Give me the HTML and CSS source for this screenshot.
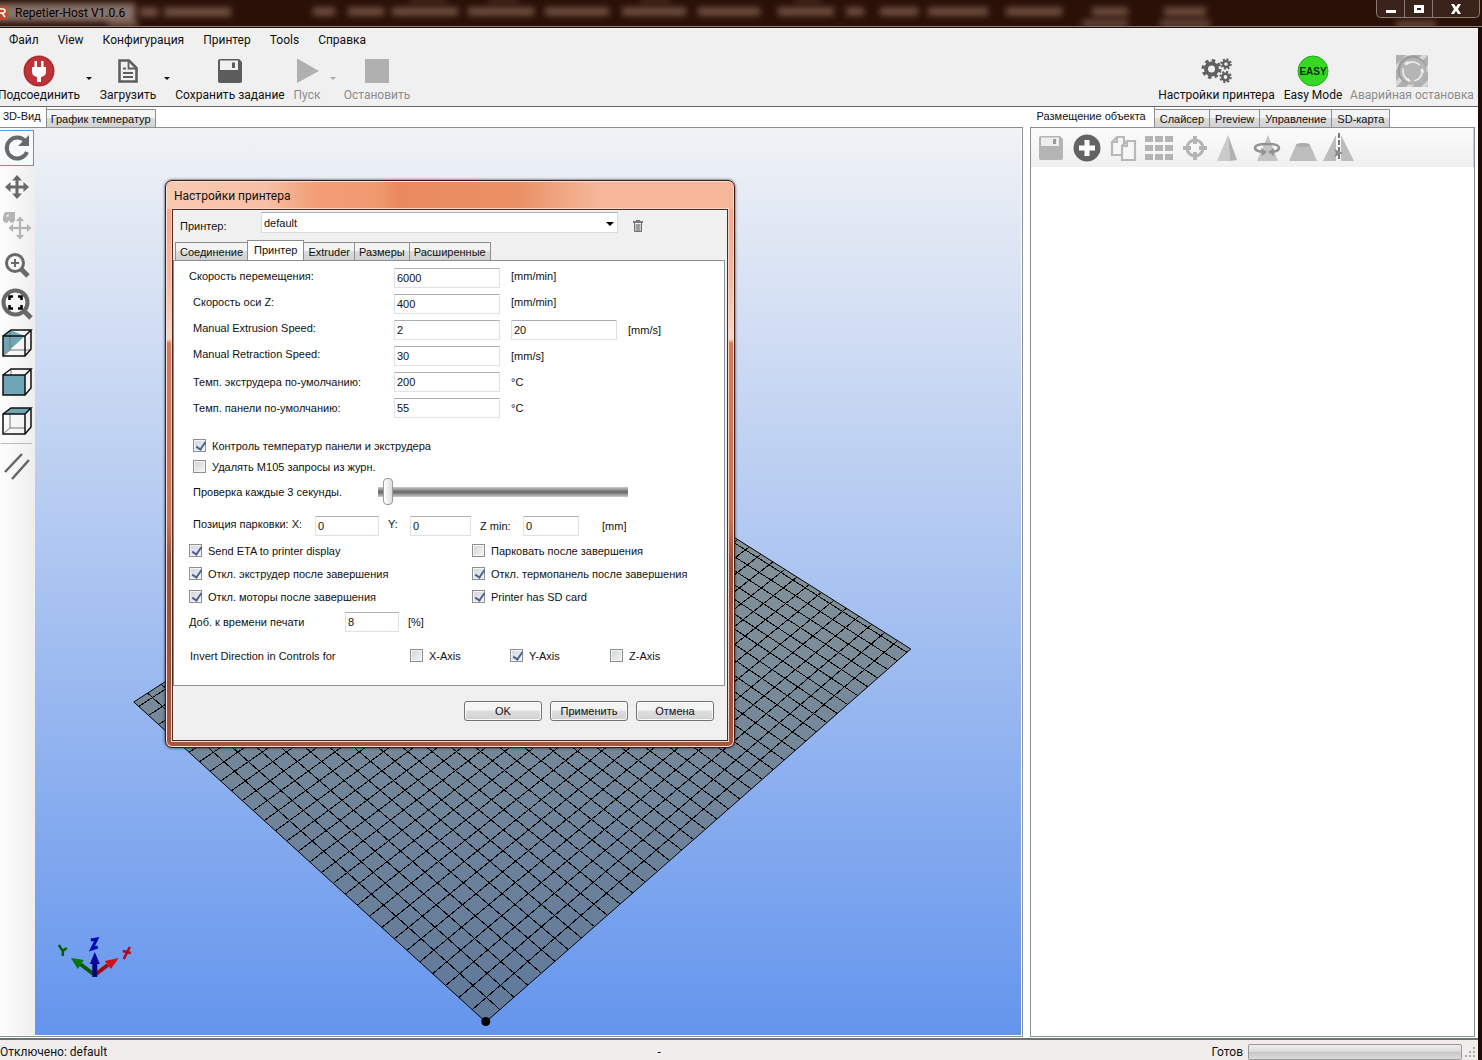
FILE: index.html
```html
<!DOCTYPE html>
<html lang="ru">
<head>
<meta charset="utf-8">
<title>Repetier-Host V1.0.6</title>
<link rel="stylesheet" href="styles.css">
</head>
<body>
<div class="app">
  <header class="titlebar">
    <svg class="glass" viewBox="0 0 1482 27" preserveAspectRatio="xMidYMid slice" aria-hidden="true">
      <defs><filter id="soft" x="-20%" y="-60%" width="140%" height="220%"><feGaussianBlur stdDeviation="3"/></filter></defs>
      <g filter="url(#soft)" fill="#8a6656" opacity=".75">
        <rect x="-10" y="4" width="145" height="18" fill="#a8938a"/>
        <rect x="140" y="8" width="18" height="9"/><rect x="164" y="8" width="67" height="9"/><rect x="108" y="22" width="30" height="6"/>
        <rect x="313" y="8" width="22" height="8"/><rect x="348" y="8" width="36" height="8"/><rect x="392" y="8" width="66" height="8"/><rect x="468" y="8" width="66" height="8"/>
        <rect x="545" y="8" width="64" height="8"/><rect x="622" y="8" width="64" height="8"/><rect x="698" y="8" width="62" height="8"/><rect x="778" y="8" width="56" height="8"/>
        <rect x="846" y="8" width="18" height="8"/><rect x="880" y="8" width="38" height="8"/><rect x="928" y="8" width="60" height="8"/><rect x="1006" y="8" width="56" height="8"/>
        <rect x="1092" y="8" width="36" height="8"/><rect x="1164" y="8" width="42" height="8"/><rect x="1082" y="21" width="46" height="6"/><rect x="1160" y="21" width="50" height="6"/>
        <rect x="410" y="0" width="36" height="2"/><rect x="488" y="0" width="30" height="2"/><rect x="640" y="0" width="30" height="2"/><rect x="796" y="0" width="24" height="2"/>
        <rect x="1396" y="22" width="40" height="6"/>
      </g>
    </svg>
    <svg class="app-icon" viewBox="0 0 9 16" aria-hidden="true"><path d="M0 1h7v14H0z" fill="#c8432b"/><path d="M7 1l2 1v11l-2 2z" fill="#6d7a4a"/><path d="M0 4h3q2 0 2 2t-2 2H0M2 8l3 4" stroke="#fff" stroke-width="1.6" fill="none"/></svg>
    <h1 class="app-title">Repetier-Host V1.0.6</h1>
    <div class="win-buttons">
      <button type="button" aria-label="Свернуть"><svg viewBox="0 0 12 10"><path d="M1 6h10v3H1z"/></svg></button>
      <button type="button" aria-label="Развернуть"><svg viewBox="0 0 12 10"><path d="M1 1h10v8H1zM4 4v2h4V4z" fill-rule="evenodd"/></svg></button>
      <button type="button" class="wide" aria-label="Закрыть"><svg viewBox="0 0 12 10"><path d="M1 0h3l2 3 2-3h3L8 5l3 5H8L6 7l-2 3H1l3-5z"/></svg></button>
    </div>
  </header>
  <div class="frame">
    <nav class="menu">
      <button type="button">Файл</button><button type="button">View</button><button type="button">Конфигурация</button><button type="button">Принтер</button><button type="button">Tools</button><button type="button">Справка</button>
    </nav>
    <div class="toolbar">
      <button type="button" class="tool w-connect"><svg viewBox="0 0 32 32"><circle cx="16" cy="16" r="15.500" fill="#be3337"/><circle cx="16" cy="16" r="14.500" fill="none" stroke="#a3282c"/><path d="M11.500 6h2.500v6h4V6h2.500v6H23v5q0 4-5 5v5h-4v-5q-5-1-5-5v-5h2.500z" fill="#fff"/></svg><span>Подсоединить</span></button>
      <button type="button" class="drop" aria-label="Выбор соединения"></button>
      <button type="button" class="tool w-load"><svg viewBox="0 0 32 32"><path d="M7.500 5.500h9.500L24.500 13v13.500h-17z" fill="none" stroke="#5f5f5f" stroke-width="2.600"/><path d="M16.500 5v8.500H25M11 13.500h3M11 18h10M11 22h10" fill="none" stroke="#5f5f5f" stroke-width="1.800"/></svg><span>Загрузить</span></button>
      <button type="button" class="drop" aria-label="Последние файлы"></button>
      <button type="button" class="tool w-save"><svg viewBox="0 0 32 32"><path d="M4 6q0-2 2-2h19l3 3v19q0 2-2 2H6q-2 0-2-2z" fill="#5c5c5c"/><path d="M6 5.500h18v9.500H6z" fill="#f0f0f0"/><path d="M18 7.500h3V13h-3z" fill="#5c5c5c"/></svg><span>Сохранить задание</span></button>
      <button type="button" class="tool w-run" disabled><svg viewBox="0 0 32 32"><path d="M6 3.500L28 16 6 28z" fill="#b0b0b0"/></svg><span>Пуск</span></button>
      <button type="button" class="drop" disabled aria-label="Параметры пуска"></button>
      <button type="button" class="tool w-stop" disabled><svg viewBox="0 0 32 32"><path d="M4 4h24v24H4z" fill="#b0b0b0"/></svg><span>Остановить</span></button>
      <span class="spacer"></span>
      <button type="button" class="tool w-settings"><svg viewBox="0 0 32 32" fill="none" stroke="#606060"><circle cx="10.500" cy="14" r="5.500" stroke-width="4"/><circle cx="10.500" cy="14" r="8.500" stroke-width="3" stroke-dasharray="3.400 3.280"/><circle cx="25" cy="9" r="3" stroke-width="2.400"/><circle cx="25" cy="9" r="4.800" stroke-width="2" stroke-dasharray="1.900 1.870"/><circle cx="24.500" cy="22" r="3.200" stroke-width="2.600"/><circle cx="24.500" cy="22" r="5.200" stroke-width="2" stroke-dasharray="2.100 1.980"/></svg><span>Настройки принтера</span></button>
      <button type="button" class="tool w-easy"><svg viewBox="0 0 32 32"><circle cx="16" cy="16" r="15" fill="#35d923" stroke="#23a81b"/><text x="16" y="20" class="easy-text" text-anchor="middle">EASY</text></svg><span>Easy Mode</span></button>
      <button type="button" class="tool w-stopall" disabled><svg viewBox="0 0 32 32"><path d="M0 0h32v32H0z" fill="#b0b0b0"/><path d="M0 10L10 0h5L0 15zM0 26l26-26h6L0 32zM10 32L32 10v6L16 32zM25 32l7-7v5l-2 2z" fill="#d8d8d8"/><circle cx="16" cy="15" r="14.500" fill="#9c9c9c"/><circle cx="17" cy="16" r="13" fill="#b5b5b5"/><circle cx="16.500" cy="16.500" r="9.500" fill="none" stroke="#efefef" stroke-width="1.500" stroke-dasharray="15.900 4" stroke-dashoffset="3"/><path d="M8 8l5-2-2 4zM27 13l1 5-4-2zM13 27l-4-3 4-1z" fill="#efefef"/></svg><span>Аварийная остановка</span></button>
    </div>
    <main class="work">
      <section class="left">
        <div class="tabs" role="tablist"><button type="button" role="tab" class="tab on" aria-selected="true">3D-Вид</button><button type="button" role="tab" class="tab">График температур</button></div>
        <div class="view">
          <div class="side">
            <button type="button" class="on" aria-label="Вращать"><svg viewBox="0 0 32 32"><path d="M24.500 9.500A10.500 10.500 0 1 0 26 20" fill="none" stroke="#696969" stroke-width="4"/><path d="M28 3v11H17z" fill="#696969"/></svg></button>
            <button type="button" aria-label="Переместить"><svg viewBox="0 0 32 32" fill="#696969"><path d="M16 4l5 5.500h-3.500v5h5V11L28 16l-5.500 5v-3.500h-5v5H21L16 28l-5-5.500h3.500v-5h-5V21L4 16l5.500-5v3.500h5v-5H11z"/></svg></button>
            <button type="button" aria-label="Переместить объект"><svg viewBox="0 0 32 32" fill="#b4b4b4"><path d="M4 2h10v9H2V6.500zM4.500 6.500h3V4z" fill-rule="evenodd"/><circle cx="5" cy="11" r="2"/><circle cx="11" cy="11" r="2"/><path d="M19 6l5 5.500h-3.500v5h5V13L31 18l-5.500 5v-3.500h-5v5H24L19 30l-5-5.500h3.500v-5h-5V23L7 18l5.500-5v3.500h5v-5H14z" stroke="#f6f6f6" stroke-width=".8"/></svg></button>
            <button type="button" aria-label="Увеличить"><svg viewBox="0 0 32 32" fill="none" stroke="#696969"><circle cx="14" cy="14" r="8.500" stroke-width="3"/><path d="M20 20l7 7" stroke-width="5"/><path d="M14 10v8M10 14h8" stroke-width="2"/></svg></button>
            <button type="button" aria-label="Показать всё"><svg viewBox="0 0 32 32" fill="none" stroke="#696969"><circle cx="14.500" cy="14.500" r="12" stroke-width="4"/><path d="M23 23l7 7" stroke-width="5"/><path d="M8.500 12V8.500H12M17 8.500h3.500V12M20.500 17v3.500H17M12 20.500H8.500V17" stroke="#000" stroke-width="2.500"/></svg></button>
            <button type="button" aria-label="Изометрия"><svg viewBox="0 0 32 32" class="cube"><path d="M2 9l7-6 15 6L2 29z" class="face"/><path d="M9 3v20l-7 6M9 23h21" class="thin"/><path d="M2 9h22v20H2zM2 9l8-6h20l-6 6M30 3v19l-6 7"/></svg></button>
            <button type="button" aria-label="Спереди"><svg viewBox="0 0 32 32" class="cube"><path d="M2 9h22v20H2z" class="face"/><path d="M10 3v6" class="thin"/><path d="M2 9h22v20H2zM2 9l8-6h20l-6 6M30 3v19l-6 7"/></svg></button>
            <button type="button" aria-label="Сверху"><svg viewBox="0 0 32 32" class="cube"><path d="M2 9l8-6h20l-6 6z" class="face"/><path d="M9 9v14l-7 6M9 23h15" class="thin"/><path d="M2 9h22v20H2zM2 9l8-6h20l-6 6M30 3v19l-6 7"/></svg></button>
            <hr>
            <button type="button" aria-label="Параллельная проекция"><svg viewBox="0 0 32 32"><path d="M4 22L21 4M11 29L28 10" stroke="#666" stroke-width="2.500"/></svg></button>
          </div>
          <svg class="scene" viewBox="35 128 986 907" preserveAspectRatio="xMidYMid slice" role="img" aria-label="Рабочий стол принтера">
            <defs><linearGradient id="bed" x1="0" y1="0" x2="0" y2="1"><stop offset="0" stop-color="#8c9898"/><stop offset="1" stop-color="#60799b"/></linearGradient></defs>
            <polygon points="486,1022 911,649 560,427 134,702" fill="url(#bed)" stroke="#000"/>
            <path id="grid" fill="none" stroke="#000" shape-rendering="crispEdges"/>
            <circle cx="486" cy="1021.500" r="4.500"/>
            <g stroke-width="4">
              <path d="M95 975L79 963" stroke="#0a5a0d"/><path d="M71 958l13 2-6 9z" fill="#08760c"/>
              <path d="M95 975l13-10" stroke="#a00a10"/><path d="M119 958l-8 11-6-8z" fill="#d01018"/>
              <path d="M95 977v-15" stroke="#06067c" stroke-width="5"/><path d="M95 952l5 12H90z" fill="#0808a0"/>
            </g>
            <g fill="none" stroke-width="2.500"><path d="M59 945l4 6 4-3M63 951v5" stroke="#06600a"/><path d="M91 940l6-1-5 10 6-2" stroke="#0808b8" stroke-width="3"/><path d="M130 947l-6 12M123 951l8 2" stroke="#b00818"/></g>
          </svg>
        </div>
      </section>
      <section class="right">
        <div class="tabs" role="tablist"><button type="button" role="tab" class="tab on" aria-selected="true">Размещение объекта</button><button type="button" role="tab" class="tab">Слайсер</button><button type="button" role="tab" class="tab">Preview</button><button type="button" role="tab" class="tab">Управление</button><button type="button" role="tab" class="tab">SD-карта</button></div>
        <div class="panel">
          <div class="obj-tools">
            <button type="button" aria-label="Сохранить"><svg viewBox="0 0 32 32"><path d="M4 6q0-2 2-2h19l3 3v19q0 2-2 2H6q-2 0-2-2z" fill="#b4b4b4"/><path d="M6 5.500h18v8.500H6z" fill="#eee"/><path d="M18 7h3v5h-3z" fill="#999"/></svg></button>
            <button type="button" aria-label="Добавить"><svg viewBox="0 0 32 32"><circle cx="16" cy="16" r="13.500" fill="#636363"/><path d="M16 8v16M8 16h16" stroke="#fff" stroke-width="5"/></svg></button>
            <button type="button" aria-label="Копировать"><svg viewBox="0 0 32 32" fill="#f6f6f6" stroke="#b8b8b8" stroke-width="2.200"><path d="M10 5h7v18H5V10zM10 5v5H5"/><path d="M20 9h8v19H15V14zM20 9v5h-5"/></svg></button>
            <button type="button" aria-label="Расставить"><svg viewBox="0 0 32 32" fill="#b4b4b4"><path d="M2 4h8v6H2zM12 4h8v6h-8zM22 4h8v6h-8zM2 13h8v6H2zM12 13h8v6h-8zM22 13h8v6h-8zM2 22h8v6H2zM12 22h8v6h-8zM22 22h8v6h-8z"/></svg></button>
            <button type="button" aria-label="Центрировать"><svg viewBox="0 0 32 32" fill="none" stroke="#b4b4b4"><circle cx="16" cy="16" r="8" stroke-width="3"/><path d="M16 4v8M16 20v8M4 16h8M20 16h8" stroke-width="4"/></svg></button>
            <button type="button" aria-label="Масштаб"><svg viewBox="0 0 32 32"><path d="M13 3L2 29h13z" fill="#cacaca"/><path d="M13 3l2 26 7-1z" fill="#b2b2b2"/></svg></button>
            <button type="button" aria-label="Вращение"><svg viewBox="0 0 32 32"><path d="M17 3L6 29h21z" fill="#c4c4c4"/><path d="M12 20Q4 19 4 16q0-4 12-4t12 4q0 3-7 4" fill="none" stroke="#939393" stroke-width="2.600"/><path d="M10 16l6 4-5 4zM23 16v8l-6-4z" fill="#939393"/></svg></button>
            <button type="button" aria-label="Разрезать"><svg viewBox="0 0 32 32"><path d="M9 13L2 29h28l-7-16q-7-4-14 0z" fill="#bdbdbd"/><ellipse cx="16" cy="13" rx="7" ry="2" fill="#adadad"/></svg></button>
            <button type="button" aria-label="Отразить"><svg viewBox="0 0 32 32"><path d="M13 3L0 29h13zM18 3v26h13z" fill="#bcbcbc"/><path d="M16 1v28" stroke="#777" stroke-width="2" stroke-dasharray="5 2"/><path d="M11 17l9 4-9 4 2-4z" fill="#8a8a8a"/></svg></button>
          </div>
        </div>
      </section>
    </main>
    <footer class="status"><span>Отключено: default</span><span class="mid">-</span><span>Готов</span><progress max="100" value="0" aria-label="Ход печати"></progress><svg class="grip" viewBox="0 0 12 12" aria-hidden="true" fill="#aaa"><path d="M9 1h2v2H9zM9 5h2v2H9zM9 9h2v2H9zM5 5h2v2H5zM5 9h2v2H5zM1 9h2v2H1z"/></svg></footer>
  </div>
</div>

<form class="dialog" role="dialog" aria-labelledby="dlg-title">
  <h2 id="dlg-title">Настройки принтера</h2>
  <div class="dlg-body">
    <div class="choose"><label for="printer">Принтер:</label><span class="combo"><select id="printer"><option>default</option></select></span><button type="button" class="trash" aria-label="Удалить"><svg viewBox="0 0 12 14"><path d="M1 2h3V1h4v1h3v2H1z" fill="#777"/><path d="M2 5h8v8H2z" fill="#ccc"/><path d="M2.500 4v8.500h7V4M5 5v7M7 5v7" fill="none" stroke="#707070"/></svg></button></div>
    <div class="tabs dlg-tabs" role="tablist"><button type="button" role="tab" class="tab">Соединение</button><button type="button" role="tab" class="tab on" aria-selected="true">Принтер</button><button type="button" role="tab" class="tab">Extruder</button><button type="button" role="tab" class="tab">Размеры</button><button type="button" role="tab" class="tab">Расширенные</button></div>
    <div class="page">
      <div class="field up outer"><label for="f1">Скорость перемещения:</label><input id="f1" value="6000"><span>[mm/min]</span></div>
      <div class="field up"><label for="f2">Скорость оси Z:</label><input id="f2" value="400"><span>[mm/min]</span></div>
      <div class="field up"><label for="f3">Manual Extrusion Speed:</label><input id="f3" value="2"><input value="20" aria-label="Быстрая подача"><span class="low">[mm/s]</span></div>
      <div class="field up"><label for="f4">Manual Retraction Speed:</label><input id="f4" value="30"><span class="low">[mm/s]</span></div>
      <div class="field"><label for="f5">Темп. экструдера по-умолчанию:</label><input id="f5" value="200"><span>°C</span></div>
      <div class="field"><label for="f6">Темп. панели по-умолчанию:</label><input id="f6" value="55"><span>°C</span></div>
      <div class="checks-top">
        <label class="check"><input type="checkbox" checked>Контроль температур панели и экструдера</label>
        <label class="check"><input type="checkbox">Удалять M105 запросы из журн.</label>
      </div>
      <div class="slide"><label for="poll">Проверка каждые 3 секунды.</label><input type="range" id="poll" min="1" max="100" value="3"></div>
      <div class="park"><label for="px">Позиция парковки: X:</label><input id="px" class="px" value="0"><label for="py">Y:</label><input id="py" class="py" value="0"><label for="pz">Z min:</label><input id="pz" class="pz" value="0"><span>[mm]</span></div>
      <div class="pairs">
        <label class="check"><input type="checkbox" checked>Send ETA to printer display</label><label class="check"><input type="checkbox">Парковать после завершения</label>
        <label class="check"><input type="checkbox" checked>Откл. экструдер после завершения</label><label class="check"><input type="checkbox" checked>Откл. термопанель после завершения</label>
        <label class="check"><input type="checkbox" checked>Откл. моторы после завершения</label><label class="check"><input type="checkbox" checked>Printer has SD card</label>
      </div>
      <div class="extra"><label for="add">Доб. к времени печати</label><input id="add" value="8"><span>[%]</span></div>
      <div class="invert"><span>Invert Direction in Controls for</span><label class="check"><input type="checkbox">X-Axis</label><label class="check"><input type="checkbox" checked>Y-Axis</label><label class="check"><input type="checkbox">Z-Axis</label></div>
    </div>
    <div class="actions"><button type="button">OK</button><button type="button">Применить</button><button type="button">Отмена</button></div>
  </div>
</form>
<script src="grid.js"></script>
</body>
</html>
```
FILE: grid.js
```js
// Builds the bed grid in perspective from the four corners of the bed.
(function () {
  const origin = [486, 1022], right = [911, 649], far = [560, 427], left = [134, 702];
  const stepsU = 36.4, stepsV = 30.5;
  const s = [0, 1].map(i => origin[i] - right[i] + far[i] - left[i]);
  const d1 = [right[0] - far[0], right[1] - far[1]];
  const d2 = [left[0] - far[0], left[1] - far[1]];
  const det = d1[0] * d2[1] - d2[0] * d1[1];
  const g = (s[0] * d2[1] - d2[0] * s[1]) / det;
  const h = (d1[0] * s[1] - s[0] * d1[1]) / det;
  const at = (u, v) => [0, 1].map(i =>
    ((right[i] * (1 + g) - origin[i]) * u + (left[i] * (1 + h) - origin[i]) * v + origin[i]) / (1 + g * u + h * v)
  ).join(' ');
  let d = '';
  for (let k = 1; k < stepsU; k++) d += 'M' + at(k / stepsU, 0) + 'L' + at(k / stepsU, 1);
  for (let k = 1; k < stepsV; k++) d += 'M' + at(0, k / stepsV) + 'L' + at(1, k / stepsV);
  document.getElementById('grid').setAttribute('d', d);
})();
```
FILE: styles.css
```css
* { box-sizing: border-box; }
body { margin: 0; background: #1d0b05; color: #111; font: 12px/16px Roboto, "Noto Sans", sans-serif; }
button, input, select { font: inherit; color: inherit; margin: 0; }
button { background: none; border: 0; padding: 0; }
svg { display: block; }

.app { display: flex; flex-direction: column; height: 100vh; overflow: hidden; }
.titlebar { position: relative; display: flex; align-items: center; height: 27px; background: #2a1108; flex: none; border-bottom: 1px solid #8c7c74; }
.glass { position: absolute; left: 0; top: 0; width: 100%; height: 100%; }
.app-icon { position: relative; width: 9px; height: 16px; }
.app-title { position: relative; margin: 0 0 0 6px; font-size: 12px; font-weight: 400; color: #000; flex: 1; }
.win-buttons { position: relative; display: flex; align-self: flex-start; height: 18px; margin-right: 2px; border: 1px solid #8b7b74; border-top: 0; border-radius: 0 0 5px 5px; background: #3a231a; }
.win-buttons button { width: 28px; border-right: 1px solid #8b7b74; display: flex; align-items: center; justify-content: center; }
.win-buttons .wide { width: 46px; border-right: 0; }
.win-buttons svg { width: 12px; height: 10px; fill: #fff; }

.frame { flex: 1; min-height: 0; display: flex; flex-direction: column; background: #f0f0f0; margin-right: 4px; border-top: 1px solid #1b0e08; }
.menu { display: flex; height: 24px; padding-left: 9px; gap: 19px; align-items: center; }
.toolbar { display: flex; height: 55px; border-bottom: 1px solid #666; padding: 3px 6px 0 0; }
.tool { display: flex; flex-direction: column; align-items: center; white-space: nowrap; height: 50px; flex: none; }
.tool svg { width: 32px; height: 32px; }
.tool:disabled { color: #8c8c8c; }
.w-connect { width: 78px; }
.w-load { width: 56px; }
.w-save { width: 104px; }
.w-run { width: 30px; margin-left: 10px; }
.w-stop { width: 64px; margin-left: 1px; }
.w-settings { width: 115px; }
.w-easy { width: 58px; margin-left: 10px; }
.w-stopall { width: 120px; margin-left: 10px; }
.drop { width: 22px; flex: none; display: flex; justify-content: center; }
.drop::before { content: ""; border: 3px solid transparent; border-top-color: #111; border-bottom: 0; margin-top: 22px; }
.drop:disabled::before { border-top-color: #aaa; }
.spacer { flex: 1; }
.easy-text { font: bold 10px "Liberation Sans", sans-serif; fill: #06310a; }

.work { flex: 1; min-height: 0; display: flex; background: #fff; border-bottom: 2px solid #6b746b; padding: 0 3px 1px 0; gap: 7px; }
.left { flex: 1; min-width: 0; display: flex; flex-direction: column; }
.right { width: 30.200%; display: flex; flex-direction: column; }
.tabs { display: flex; align-items: flex-end; height: 20px; font: 11px/16px "Liberation Sans", Arial, sans-serif; flex: none; }
.tab { height: 18px; padding: 0 5px; border: 1px solid #8b8e92; border-bottom: 0; margin-left: -1px; background: linear-gradient(#f4f4f4 45%, #dcdcdc 50%, #d2d2d2); white-space: nowrap; }
.tab.on { height: 20px; background: #fff; border-top: 0; border-left: 0; padding: 0 8px 2px 7px; margin-left: 0; position: relative; }
.left .tab.on { padding: 0 5px 2px 3px; }
.left .tab { padding: 0 4px; }
.view { flex: 1; min-height: 0; display: flex; border: 1px solid #8b8e92; border-left: 0; padding: 0 1px 1px 0; }
.side { width: 35px; flex: none; display: flex; flex-direction: column; gap: 3px; background: linear-gradient(90deg, #fdfdfd, #eee); padding-top: 2px; }
.side button { height: 36px; width: 34px; display: flex; align-items: center; justify-content: center; border: 1px solid transparent; border-left: 0; }
.side button.on { border-color: #5599dd; background: #f6faff; }
.side svg { width: 32px; height: 32px; flex: none; }
.side hr { width: 31px; margin: 1px; border: 0; border-top: 1px solid #bbb; }
.cube path { fill: none; stroke: #111; stroke-width: 1.500; }
.cube .face { fill: #6fa5b5; stroke: none; }
.cube .thin { stroke: #777; stroke-width: 1; }
.scene { flex: 1; min-width: 0; height: 100%; background: linear-gradient(#f0f2f5, #6495ed); }
.panel { flex: 1; border: 1px solid #8b8e92; }
.obj-tools { display: flex; gap: 4px; height: 39px; padding: 4px 4px; background: linear-gradient(#fbfbfb, #f0f0f0); border-right: 1px solid #ccc; }
.obj-tools svg { width: 32px; height: 32px; }

.status { display: flex; align-items: center; height: 20px; background: #f0edec; flex: none; padding: 3px 2px 0 0; }
.status .mid { margin: 0 auto; }
.status progress { appearance: none; width: 214px; height: 16px; margin-left: 5px; border: 1px solid #999; border-radius: 2px; background: linear-gradient(#eee, #ddd 45%, #c6c6c6 50%, #ddd); }
.status progress::-webkit-progress-bar { background: none; }
.grip { width: 12px; height: 12px; margin-left: 2px; }

/* Modal window lying over the workspace */
.dialog { position: absolute; left: 165px; top: 180px; width: 570px; padding: 0 6px 6px; border: 1px solid #3c1c12; border-radius: 7px; background: linear-gradient(#f4a381 0, #f7b89c 100px, #f9d5c6 158px, #d77b5c 162px, #cd7254 340px, #9c5139 380px, #a5563c); box-shadow: inset 0 0 0 1px #fbe3d8, 0 0 3px #2c2c3c; font: 11px/14px "Liberation Sans", Arial, sans-serif; }
.dialog h2 { margin: 1px -5px 0; padding: 6px 6px 0 7px; height: 27px; font: 12px/16px Roboto, "Noto Sans", sans-serif; border-radius: 5px 5px 0 0; background: linear-gradient(90deg, #f9c9b2, #f7bfa5 100px, #f29d75 150px, #f09a70 210px, #e98a5e 230px, #eb9065 350px, #f5b699 430px, #f5b699); }
.dlg-body { background: #f0f0f0; border: 1px solid #4d2b20; box-shadow: 0 0 0 1px #f8d4c4; padding: 0 2px 19px 0; }
.choose { display: flex; align-items: flex-start; padding: 2px 0 0 7px; height: 30px; }
.choose label { width: 81px; padding-top: 7px; }
.combo { position: relative; width: 357px; }
.combo select { appearance: none; width: 100%; height: 21px; border: 1px solid #d8dce0; border-top-color: #abadb3; background: #fff; padding: 0 2px; }
.combo::after { content: ""; position: absolute; right: 4px; top: 10px; border: 4px solid transparent; border-top-color: #000; border-bottom: 0; }
.trash { margin: 7px 0 0 14px; }
.trash svg { width: 12px; height: 14px; }
.dlg-tabs { padding-left: 3px; }
.dlg-tabs .tab { padding: 0 4px; }
.dlg-tabs .tab.on { border: 1px solid #8b8e92; border-bottom: 0; padding: 0 6px 2px; margin-left: -1px; }
.page { background: #fff; border: 1px solid #8b8e92; height: 426px; padding: 4px 0 0 15px; }
.page input:not([type]) { height: 20px; border: 1px solid #dde1e8; border-top-color: #abadb3; border-radius: 1px; padding: 0 2px; background: #fff; }
.field { display: flex; align-items: center; height: 26px; padding-left: 4px; gap: 11px; }
.field.outer { padding-left: 0; }
.field label { width: 190px; flex: none; }
.field.outer label { width: 194px; }
.field input { width: 106px; }
.field.up label, .field.up span { padding-bottom: 5px; }
.field.up .low { padding: 0; }
.checks-top { padding: 14px 0 0 4px; }
.check { display: flex; align-items: center; gap: 6px; height: 23px; }
.checks-top .check { height: 21px; }
.check input { appearance: none; position: relative; flex: none; width: 13px; height: 13px; border: 1px solid #8e8f8f; background: linear-gradient(135deg, #cfd3d8, #f6f6f6); box-shadow: inset 0 0 0 1px #f4f4f4; }
.check input:checked::after { content: ""; position: absolute; left: 4px; top: 0; width: 4px; height: 8px; border: solid #4b5f97; border-width: 0 2px 2px 0; transform: rotate(35deg); }
.slide { display: flex; align-items: center; height: 29px; padding-left: 4px; }
.slide label { width: 185px; }
.slide input { appearance: none; width: 250px; height: 27px; background: linear-gradient(#ccc, #666 50%, #ccc) center / 100% 10px no-repeat; }
.slide input::-webkit-slider-thumb { appearance: none; width: 10px; height: 27px; border: 1px solid #999; border-radius: 4px; background: linear-gradient(90deg, #fff, #ddd); }
.park { display: flex; align-items: center; height: 26px; margin-top: 7px; padding-left: 4px; }
.park label:first-child { width: 122px; padding-bottom: 4px; }
.park .px { width: 64px; margin-right: 9px; }
.park .px + label { width: 22px; padding-bottom: 4px; }
.park .py { width: 61px; margin-right: 9px; }
.park .py + label { width: 43px; }
.park .pz { width: 56px; margin-right: 23px; }
.pairs { display: grid; grid-template-columns: 283px 1fr; }
.extra { display: flex; align-items: center; height: 28px; }
.extra label { width: 156px; }
.extra input { width: 54px; margin-right: 9px; }
.invert { display: flex; align-items: center; margin-top: 8px; }
.invert span { width: 221px; padding-left: 1px; }
.invert .check { width: 100px; }
.actions { display: flex; justify-content: flex-end; gap: 8px; padding: 15px 11px 0 0; }
.actions button { width: 78px; height: 20px; border: 1px solid #70747a; border-radius: 3px; background: linear-gradient(#f4f4f4 45%, #dedede 50%, #d0d0d0); box-shadow: inset 0 0 0 1px #fafafa; }
```
